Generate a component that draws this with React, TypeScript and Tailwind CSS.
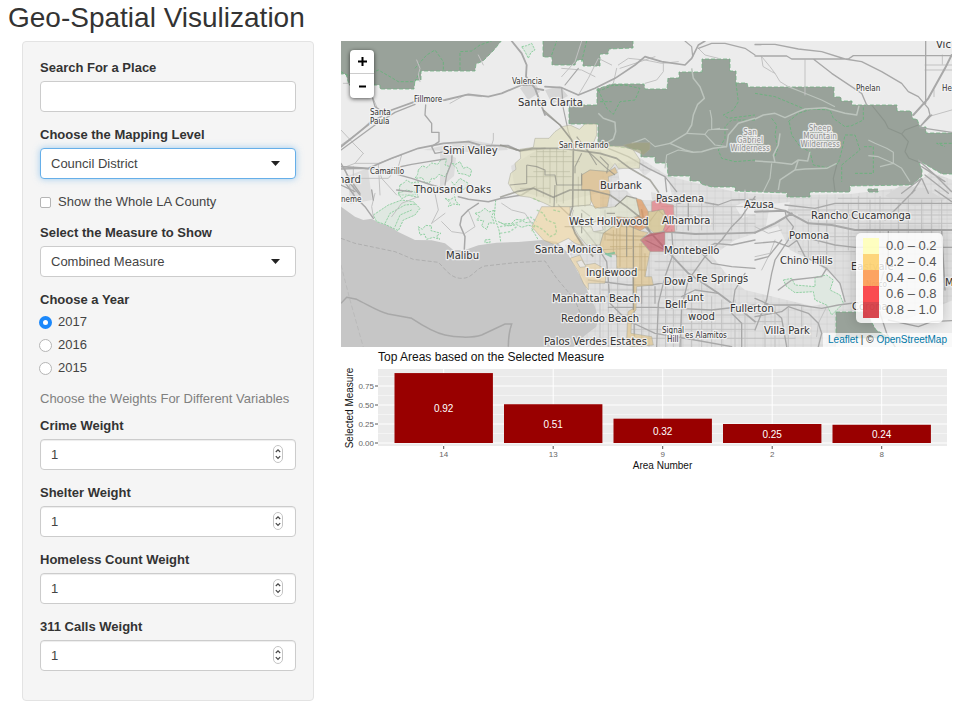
import { useId, useState, type ReactNode } from "react";

/* ---------- Sidebar controls ---------- */

const labelClass = "mb-1 block font-bold text-[#333]";
const fieldClass =
  "block h-[31px] w-full rounded-[4px] border bg-white px-[10px] text-[13px] text-[#444] outline-none";
const restClass = " border-[#ccc]";
const activeClass = " border-[#66afe9] shadow-[0_0_7px_rgba(102,175,233,0.6)]";

function TextField({ label }: { label: string }) {
  const id = useId();
  return (
    <div className="mb-[14px]">
      <label htmlFor={id} className={labelClass}>{label}</label>
      <input id={id} type="text" className={fieldClass + restClass} />
    </div>
  );
}

function SelectField({ label, options, active }: { label: string; options: string[]; active?: boolean }) {
  const id = useId();
  return (
    <div className="mb-[14px]">
      <label htmlFor={id} className={labelClass}>{label}</label>
      <div className="relative">
        <select id={id} className={fieldClass + " appearance-none" + (active ? activeClass : restClass)}>
          {options.map((o) => (
            <option key={o}>{o}</option>
          ))}
        </select>
        <svg className="pointer-events-none absolute right-4 top-[13px] h-[5px] w-[9px]" viewBox="0 0 9 5">
          <path d="M0 0H9L4.500 5Z" fill="#222" />
        </svg>
      </div>
    </div>
  );
}

function NumberField({ label }: { label: string }) {
  const id = useId();
  return (
    <div className="mb-[14px]">
      <label htmlFor={id} className={labelClass}>{label}</label>
      <div className="relative">
        <input
          id={id}
          type="number"
          defaultValue={1}
          className={
            fieldClass +
            restClass +
            " shadow-[inset_0_1px_1px_rgba(0,0,0,0.075)] [appearance:textfield] [&::-webkit-inner-spin-button]:appearance-none"
          }
        />
        <svg className="pointer-events-none absolute right-[13px] top-[6px] h-[18px] w-[10px]" viewBox="0 0 10 18">
          <rect x="0.5" y="0.5" width="9" height="17" rx="4.500" fill="#fff" stroke="#c4c4c4" />
          <path d="M2.800 7 5 4.800 7.200 7M2.800 11.200 5 13.400 7.200 11.200" fill="none" stroke="#444" strokeWidth="1.200" />
        </svg>
      </div>
    </div>
  );
}

function YearPicker() {
  const [year, setYear] = useState("2017");
  return (
    <fieldset className="mb-[13px]">
      <legend className={labelClass}>Choose a Year</legend>
      <div className="flex flex-col gap-[5px]">
        {["2017", "2016", "2015"].map((y) => (
          <label key={y} className="flex items-center gap-[6px]">
            <input
              type="radio"
              name="year"
              value={y}
              checked={year === y}
              onChange={() => setYear(y)}
              className="-ml-px size-[13px] appearance-none rounded-full border border-[#b5b5b5] bg-white checked:border-[4px] checked:border-[#1b88fb]"
            />
            {y}
          </label>
        ))}
      </div>
    </fieldset>
  );
}

function Sidebar() {
  return (
    <form className="col-span-4 rounded-[4px] border border-[#e3e3e3] bg-[#f5f5f5] px-[17px] pb-[15px] pt-[17px] text-[13px] leading-[18px] text-[#444]">
      <TextField label="Search For a Place" />
      <SelectField label="Choose the Mapping Level" options={["Council District", "Zip Code", "Census Tract"]} active />
      <label className="mb-[13px] flex items-center gap-[7px]">
        <input
          type="checkbox"
          className="size-[11px] appearance-none rounded-[2px] border border-[#b5b5b5] bg-white checked:bg-[#1b88fb]"
        />
        Show the Whole LA County
      </label>
      <SelectField label="Select the Measure to Show" options={["Combined Measure", "Crime", "Shelter"]} />
      <YearPicker />
      <p className="mb-[9px] text-[#808080]">Choose the Weights For Different Variables</p>
      <NumberField label="Crime Weight" />
      <NumberField label="Shelter Weight" />
      <NumberField label="Homeless Count Weight" />
      <NumberField label="311 Calls Weight" />
    </form>
  );
}

/* ---------- Map ---------- */

/* Map sheets are drawn on a grid three times finer than the view. */
function Sheet({ x, y, children }: { x: number; y: number; children: ReactNode }) {
  return <g transform={`translate(${x} ${y}) scale(0.33333)`}>{children}</g>;
}

const GREEN = "#72b184";
const PALE = "#bcc4bd";
const BASIN =
  "M600 168 640 158 668 176 700 184 740 193 790 195 850 194 915 186 930 172 953 180V347H575L598 320 590 290 578 270 565 245 600 225Z";

function Land() {
  return (
    <>
      <rect x="341" y="41" width="612" height="306" fill="#ececec" />
      <path d={BASIN} fill="#dfdfdf" />
      <path d="M511 166 540 148 600 150 620 172 612 190 560 202 515 190Z" fill="#dedede" />
      <path d={BASIN} fill="url(#streets)" />
      <path d="M348 176 368 168 372 200 350 204ZM423 150 470 140 505 146 508 150 470 152ZM440 150 456 158 454 176 440 188Z" fill="#dcdcdc" />
      {/* hills */}
      <path
        d="M712 256 735 240 760 232 778 226 790 250 815 262 838 280 844 300 812 306 770 296 745 290 728 276ZM652 170 668 178 672 196 650 192 642 178ZM836 330 870 318 905 320 953 300V347H836Z"
        fill="#ececec"
      />
      <path d="M618 170 636 166 650 182 652 200 636 200 620 184Z" fill="#eeeeee" />
      <path d="M735 206 750 200 756 214 742 218ZM770 204 790 202 786 216 766 226Z" fill="#ececec" />
      {/* darker town centres */}
      <path d="M520 88 534 80 540 92 528 100ZM545 90 560 86 568 96 552 104ZM900 186 925 188 945 200 915 206 885 196Z" fill="#d6d6d6" />
    </>
  );
}

function Ocean() {
  return (
    <Sheet x={335} y={190}>
      <path
        d="M18 50 35 62 60 80 85 90 110 86 135 100 160 106 190 126 240 150 290 151 330 160 355 180 390 180 430 166 485 158 550 156 620 150 665 155 695 185 725 240 750 285 765 320 780 350 790 385 784 410 755 432 735 450 715 472H18Z"
        fill="#c6c6c6"
      />
      <g fill="none" stroke="#a9a9a9">
        <path
          d="M18 145 60 160 180 185 235 208 310 217 C330 235 345 265 380 265 C415 265 420 235 450 228L540 218 630 213 665 265 720 330 748 400"
          strokeWidth="2.500"
          strokeDasharray="12 6"
        />
        <path d="M18 225 45 330 62 390 85 472" strokeWidth="2" strokeDasharray="14 7" stroke="#b4b4b4" />
        <path d="M18 340 35 322 65 328C100 345 130 365 160 372L230 385C260 405 300 428 330 435S410 445 440 435L510 402 530 402Q520 430 520 470" strokeWidth="4.500" stroke="#a8a8a8" />
      </g>
    </Sheet>
  );
}

function Parks() {
  return (
    <>
      <g fill="#99a29a" stroke={GREEN} strokeWidth="0.8" strokeDasharray="4 2">
        <path d="M340 40H502L494 50 483 61 476 64 475 71H421V80H415L414 89H380V85H349L346 74H340Z" />
        <path d="M543 40H633V48L609 49 608 54H600V66H583V60H577L575 65H552V57H543Z" />
        <path d="M569 105H597V89L612 84H644L645 89H667L668 78H679V72H702V59H730V71H736V83H747L748 87H834V97H841V101H852V105H897V111H911L913 119H917L920 127H926V133H954V174H942L935 170 918 160 922 170V176L912 185 850 186V192H810V197H787V193L735 191V187H712L701 184 700 181H690V176H668L667 163H655V157H641V150L612 146H598V124H569Z" />
        <path d="M836 312H866L876 330 890 338H836Z" />
        <path d="M868 189H878V192H868Z" />
      </g>
      <g fill="none" stroke="#68b27c" strokeWidth="2.800" strokeDasharray="9 5">
        <Sheet x={335} y={35}>
          <path d="M18 110 35 120 85 125 130 105 165 125 190 140 240 140 255 110M240 100 275 60 300 45 325 80V105M375 105V50L410 48 435 30 470 18" />
        </Sheet>
        <Sheet x={545} y={35}>
          <path d="M20 60 35 18M110 80 125 18M160 165 185 220 205 238 225 200 270 195 285 160 240 150 200 152 170 165ZM165 200 200 200M573 145 580 200 565 225 535 240 550 250 630 240M630 255H560L540 275V310L520 345 530 370 570 380 630 375" />
        </Sheet>
        <Sheet x={755} y={35}>
          <path d="M0 175 60 185 120 210 155 225M100 260 130 235 170 222 225 225 235 250 270 275 290 272 325 255V215M103 262 110 300 135 335 165 350 175 390 215 398 250 385 262 340 270 300 300 300 315 345 290 365 260 390V440M50 250 65 270 60 300 68 340 60 365M300 415H355V335H325M590 325H545L570 335" />
        </Sheet>
      </g>
      {/* smaller reserves, speckled outlines */}
      <g fill="#dfe8e1" stroke="#93d0a4" strokeWidth="3" strokeDasharray="7 3">
        <Sheet x={335} y={35}>
          <path d="M250 405 262 392 275 398 290 384 308 388 318 374 335 372 330 390 345 395 338 410 330 425 312 418 300 432 290 430 284 442 270 445 262 428 240 430 248 418ZM195 450 205 445 215 435 228 444 250 440 252 455 265 465 248 468 240 480H190ZM350 385 362 388 375 380 385 400 396 396 410 405 405 425 390 418 370 415 366 400Z" fillOpacity="0.6" />
          <path d="M350 440 358 450 375 430 400 445 390 462 370 466 356 480" fillOpacity="0.6" />
          <path d="M560 35 575 32 590 25 600 45 588 52 580 70 570 50Z" />
        </Sheet>
        <Sheet x={335} y={190}>
          <path d="M115 75 160 45 200 30 235 35 255 55 240 75 205 90 190 122 150 103 125 95Z" />
          <path d="M250 110 262 118 272 106 290 108 288 122 300 125 318 130 304 138 315 148 295 142 275 148 268 132 255 135ZM420 70 436 66 450 55 462 66 480 60 470 78 478 100 462 98 455 118 440 108 446 92 425 90 434 80ZM330 25 344 30 360 20 362 34 375 45 356 42 340 50 346 38ZM490 95 505 102 530 100 542 88 560 90 572 98 590 95 600 110 580 106 560 112 545 104 520 108ZM450 150 465 148 465 158 450 158ZM190 10 215 0 245 8 250 22 220 16 200 26Z" fillOpacity="0.4" />
          <path d="M482 30 478 80 492 120 497 155M590 115 610 150" fill="none" />
          <path d="M150 100 165 70 210 45 245 42M180 110 195 75 230 60" fill="none" />
        </Sheet>
        <Sheet x={755} y={190}>
          <path d="M85 270 110 265 120 285 180 290 180 262 215 255 235 270 225 300 255 315 265 340 230 375 215 345 180 330 175 305 120 308 95 290Z" />
        </Sheet>
      </g>
      <g fill="none" stroke={PALE} strokeWidth="4.500" strokeLinejoin="round">
        <Sheet x={545} y={35}>
          <path d="M160 235 175 250 210 262 212 290 205 312 180 325M440 100 445 130 465 155 478 190 458 208 445 240 440 270 425 295 400 310 375 325 420 345 445 352 470 350 505 340 545 335 550 300 580 265 630 250" />
          <path d="M425 295 480 298 510 330 545 335M495 225 500 250 500 283H550M478 300 490 285 525 280M445 352 400 345 365 360 360 400M375 325 330 335 300 310 260 325" strokeWidth="3.500" />
        </Sheet>
        <Sheet x={755} y={35}>
          <path d="M0 252 25 240 60 235 90 248 130 230 150 222 210 218 270 235 305 240 312 212M0 378 60 382 110 388 130 375 158 378 165 350M60 382 55 360 70 330 75 295M130 375 120 405 75 435 70 465M120 405 150 402 215 400 245 385" />
          <path d="M340 315 360 325 395 340 415 352 415 385 440 400 465 440M340 362 370 365 415 385 375 395M50 385 45 430 25 470M100 155 150 175 200 195 240 215" strokeWidth="3.500" />
          <path d="M350 210 390 260 400 280 440 297 460 320 450 350 462 370 500 385M440 297 450 285 490 270M245 390 235 430 240 470" strokeWidth="3.500" stroke="#8b948c" />
        </Sheet>
      </g>
    </>
  );
}

function Roads() {
  return (
    <g fill="none" strokeLinejoin="round" strokeLinecap="round">
      {/* local roads */}
      <g stroke="#c2c2c2" strokeWidth="3">
        <Sheet x={335} y={35}>
          <path d="M25 145H45M110 180 125 215M18 285 60 330 85 355M18 330 75 290 105 260M85 355 60 385 20 400M60 385 130 385 200 360M75 430H160L190 395 200 360M130 385 135 480M55 395V480M245 75 255 100 250 120 255 140M430 60 445 90M345 205 390 180 440 185M475 295V315L470 330M130 395 140 430 185 480M30 400 48 470" />
        </Sheet>
        <Sheet x={545} y={35}>
          <path d="M100 180 130 130 160 70 200 90M50 100 110 105 150 125M220 90 250 70 300 75 350 85 400 80M355 80V110L335 135 300 145M460 40 480 60 520 70M110 18 90 80 50 125M215 100 205 145M225 100 330 65" />
        </Sheet>
        <Sheet x={755} y={35}>
          <path d="M20 65 45 95 60 115 50 110 25 95ZM60 115 75 140 100 155M510 90H590M510 105H590M562 60V88M150 75V180M537 165V185M590 225 555 235 520 245M0 30H18" />
        </Sheet>
        <Sheet x={335} y={190}>
          <path d="M120 10 110 50 115 80M250 20 200 40 170 80M300 10 310 60 290 100M330 70 290 100M500 40 530 60 570 70 590 100M385 130 350 125 320 95M400 60 420 110 390 130" />
        </Sheet>
        <Sheet x={545} y={190}>
          <path d="M165 80V470M190 240V470M218 230V470M245 90V250M290 290V470M312 200V470M362 290V470M385 200V470M410 330V470M440 320V470M470 270V470M500 320V470M530 330V470M570 330V470M600 350V470M170 300H430M180 320H430M190 375H600M250 400H630M260 418H630M280 445H630M395 30V120M430 30V120M470 20V120M505 40V120M560 50V120M350 50H630M380 75H630M370 150H560M380 100H630M330 215H460M330 240H460M600 0V130" />
        </Sheet>
        <Sheet x={755} y={190}>
          <path d="M160 90V200M190 30V160M215 30V200M240 60V180M280 40V180M310 20V120M345 30V120M375 20V130M430 40V130M460 20V130M500 30V130M530 30V130M560 30V130M100 60H590M130 75H590M140 140H300M130 185H300M180 100H590M250 25H590M0 370H60M0 395H80M0 445H120M30 330V470M60 350V470M100 355V470M140 350V420M0 110 40 130 80 120M0 200 45 190 60 150M20 240 40 200M215 350 190 400 185 440" />
        </Sheet>
      </g>
      {/* highways */}
      <g stroke="#a8a8a8" strokeWidth="4">
        <Sheet x={335} y={35}>
          <path d="M18 335 105 265 170 225 240 200 330 195 400 178 460 185 500 175 560 150 590 150" strokeWidth="5.500" />
          <path d="M18 345 120 270 180 232 240 208M272 210 270 240 290 265V292H312V320L290 335 300 355 330 350" />
          <path d="M18 395 100 400 170 370 250 340 325 325 400 320 440 332 520 332 555 348 630 340M520 332 545 345" strokeWidth="5" />
          <path d="M352 340 350 380 335 420 330 450M330 372 280 380 230 388 150 405 80 400 18 402M18 450 60 470M150 408 230 430 290 450 330 460" />
          <path d="M530 18 560 55 575 90 573 125 600 160 630 240M600 160 625 165" strokeWidth="5.500" />
          <path d="M18 385 40 425 75 475M110 180 120 215 150 235" />
        </Sheet>
        <Sheet x={545} y={35}>
          <path d="M0 155 50 158 100 180 150 160 210 130 270 90 300 65 350 80 420 90 440 70 460 30 480 18" strokeWidth="5" />
          <path d="M420 18 440 35 443 65M460 40 500 25 540 25 600 40 630 60M50 158 55 220 70 290 85 330M0 235 45 270 80 315M100 100 60 150" strokeWidth="3.500" />
          <path d="M190 340 250 365 310 400 360 425 395 470M360 425 365 470" />
        </Sheet>
        <Sheet x={755} y={35}>
          <path d="M0 28 60 28 130 42 200 50 270 72 320 80 380 110 440 145 460 170 490 185 520 220 525 240 495 275M0 63H95L110 72H280L295 62H590M175 72 230 115 320 175 335 210M512 18V205M495 278 590 292M495 275 530 240" />
          <path d="M590 60 570 100 520 190 475 240" strokeWidth="6" />
          <path d="M490 375 540 420 590 470M500 395 570 440M440 475 500 430M510 420 580 475M470 475 500 430 520 475" />
        </Sheet>
        <Sheet x={335} y={190}>
          <path d="M18 -40 60 20 90 50 115 85M45 -20 75 15M185 0 230 5M370 20 400 28 460 35 500 25 560 15 600 -10M430 40 400 60 380 80 375 105 390 140 388 178M110 0 115 30" strokeWidth="4.500" />
        </Sheet>
        <Sheet x={545} y={190}>
          <path d="M150 125 200 135 300 140 360 125 450 132 560 130 630 128M290 60 300 110 355 170 430 250 520 310 600 370 630 395" strokeWidth="5.500" />
          <path d="M40 45 110 110 150 160 185 215 190 270 195 340 245 390 330 430 450 450 560 470M265 140 268 470M380 120 385 190 360 260 340 340 335 470M560 110 530 150 480 200 430 270 410 350 405 470M300 150 380 190 450 190 510 160 560 165 630 150M130 270 250 285 320 285 400 270 420 265M190 352H330L500 360 630 345M350 20 400 40 440 30 520 45 560 30 630 28M630 20 590 80 560 110M470 190 500 220 560 230 630 235M430 20V120M410 320 450 300 520 310M600 250 570 300 560 370 590 400V470" />
          <path d="M60 110H290M110 60 150 90M150 180 260 175M180 60V150M215 100V200M310 100 340 60 380 100 360 125M290 160V340M330 290V340" strokeWidth="3.500" />
        </Sheet>
        <Sheet x={755} y={190}>
          <path d="M0 65 90 62 160 100 230 105 300 120H590M0 128 60 100 110 70" strokeWidth="6" />
          <path d="M0 45 40 50 90 62 95 85 115 110 100 150 60 210 50 250 35 330 0 420M0 160 60 155 100 170 140 140 240 165 300 172 590 172M90 45 180 55 240 40 590 40M110 120 150 200 215 235 255 280 270 335M0 325 45 345 130 345 200 355 250 345 330 335M400 120V200L370 300 375 370 395 430 420 470M0 380 80 365 100 350 160 370 190 400 200 430 190 470M30 340 80 385 95 470M560 120 570 300M0 210 40 200 80 150M390 90 470 10 480 0M540 0 590 35M70 300 110 270 200 260 215 235M400 390 490 410 530 395 590 392" />
        </Sheet>
      </g>
    </g>
  );
}

function Districts() {
  return (
    <g stroke="#a8a89a" strokeWidth="2" strokeOpacity="0.75" fillOpacity="0.62">
      <Sheet x={500} y={110}>
        <path
          d="M187 50 210 45 238 58 255 42H290V75L280 100 330 108H370L400 120 420 150 418 175H355L345 160 325 185 270 180 245 195V240H270L275 270 270 285 210 290H155L130 278 90 262 60 258 40 245 25 220 32 190 48 178 45 160 62 145 60 118 100 112 105 85 147 85 165 65Z"
          fill="#deddb8"
        />
        <path d="M210 290 270 285 300 295 345 290 380 258 410 268 420 315 390 325 345 320V345L310 370 300 405H260L235 375 212 335 220 300Z" fill="#e0e3c9" />
        <path d="M370 105 400 98H450V118L430 135 400 120Z" fill="#a3a17b" />
        <path d="M125 290 210 290 212 345 232 375 255 410 225 400 205 385 165 405 130 390 95 350 105 330Z" fill="#edd39c" />
        <path d="M245 195 270 180 325 185 345 172 352 188 340 195 325 200 330 250 322 290 285 295 272 270 270 240H245Z" fill="#dfb878" />
        <path d="M345 320 400 325 420 315 408 265 425 270 445 305 450 345 420 362 380 345H345Z" fill="#e0965a" fillOpacity="0.7" />
        <path d="M445 305 490 298 502 330 490 362 465 372 440 350Z" fill="#d6c48c" fillOpacity="0.75" />
        <path d="M455 275 488 262 500 282 520 285 525 365 495 368 490 360 502 330 490 298 455 305Z" fill="#e37b82" fillOpacity="0.72" />
        <path d="M420 390 450 370 495 365V425H450Z" fill="#c24a58" />
        <path d="M300 405 310 370 345 345 380 345 420 362 445 368 420 390 450 425 445 450 435 500 455 500 460 525 410 530 408 600 395 612 393 670 455 680 460 705 390 710 380 690 384 605 400 595 398 475H350V435L315 430Z" fill="#e2c384" />
        <path d="M210 445 240 435 255 465 285 460 320 480 315 520 265 520V540L250 520 235 485Z" fill="#eed3a0" />
      </Sheet>
      <Sheet x={500} y={110}>
        <path d="M230 455 245 450 258 470 240 472ZM270 340 300 330 310 360 280 365Z" fill="#e8e8e8" fillOpacity="0.9" />
        <path d="M110 125H200M90 140H215M110 155H240M100 185H210M80 200H215M60 235H150M110 115V260M130 120V260M150 115V280M170 115V280M190 120V280M235 200V290M255 240V290" fill="none" stroke="#bcbca2" strokeWidth="2.500" />
        <path d="M320 390H440M330 410H440M350 440H445M340 360V430M360 350V470M420 400V480M435 430V500M400 480H440" fill="none" stroke="#c0ab7c" strokeWidth="2.500" />
        <path d="M315 430 335 440 325 432 345 428" fill="none" stroke="#6fbf98" strokeWidth="6" />
        <path d="M110 300 130 310 140 330 165 340 170 370 150 380 130 360 105 345 95 365M100 265 120 275M160 300 180 305" fill="none" stroke="#a3cf95" strokeWidth="4" strokeDasharray="8 5" />
        <path d="M0 350 30 345 60 335 90 320 110 335M0 370 30 365 50 350" fill="none" stroke="#93d0a4" strokeWidth="4" strokeDasharray="7 5" />
        <g fill="none" stroke="#8f8f86" strokeOpacity="0.7" strokeLinejoin="round">
          <path d="M130 0 180 45 215 90 220 120 218 290 208 320 225 370 250 410 280 440M0 105 60 122 100 115 190 115 300 130 350 145 390 175 450 210 475 245 480 280M0 262 50 245 100 235 160 262 210 240 270 240 330 255 380 290 430 330 450 365" strokeWidth="5" />
          <path d="M80 165V220L30 225M80 165 110 170 135 180V195H165L170 225 245 225V190M165 225 162 290M245 130 225 170V190M300 140 325 165 320 190M230 80 260 120 320 175 345 195M250 100 290 165M345 290 380 258 410 265M380 345V440M400 345V600M245 310V370M320 310H345" strokeWidth="3.500" />
        </g>
      </Sheet>
    </g>
  );
}

type Place = [name: string, x: number, y: number];

const CITIES: Place[] = [
  ["Vic", 936, 48], ["Santa Clarita", 518, 106], ["Simi Valley", 443, 154], ["Thousand Oaks", 414, 193],
  ["nard", 338, 183], ["Malibu", 446, 259], ["Santa Monica", 535, 253], ["West Hollywood", 569, 225],
  ["Burbank", 600, 189], ["Pasadena", 656, 202], ["Alhambra", 662, 224], ["Montebello", 664, 254],
  ["Inglewood", 586, 276], ["Manhattan Beach", 552, 302], ["Redondo Beach", 561, 322],
  ["Palos Verdes Estates", 544, 345], ["Azusa", 744, 208], ["Rancho Cucamonga", 811, 219],
  ["Pomona", 789, 239], ["Chino Hills", 780, 264], ["Eastvale", 851, 270], ["Corona", 852, 310],
  ["Fullerton", 730, 312], ["Villa Park", 764, 334], ["M", 945, 286], ["Dow", 664, 285],
  ["a Fe Springs", 687, 282], ["Bellf", 665, 308], ["unt", 687, 301], ["wood", 688, 320],
];

const TOWNS: Place[] = [
  ["Valencia", 512, 84], ["Fillmore", 414, 102], ["Santa", 370, 115], ["Paula", 370, 124],
  ["Camarillo", 370, 174], ["neme", 341, 202], ["San Fernando", 559, 148], ["Phelan", 856, 91],
  ["He", 942, 91], ["Norco", 866, 287], ["Signal", 662, 333], ["Hill", 667, 342], ["es Alamitos", 685, 338],
];

const WILDS: Place[] = [
  ["San", 750, 135], ["Gabriel", 750, 143], ["Wilderness", 750, 151],
  ["Sheep", 820, 131], ["Mountain", 820, 139], ["Wilderness", 820, 147],
];

function Names({ places }: { places: Place[] }) {
  return (
    <>
      {places.map(([name, x, y]) => (
        <text key={name + x} x={x} y={y}>{name}</text>
      ))}
    </>
  );
}

function ZoomControl() {
  const button = "flex w-full items-center justify-center text-black";
  return (
    <div className="absolute left-[9px] top-[9px] w-6 divide-y divide-[#ccc] rounded-[4px] bg-white shadow-[0_1px_4px_rgba(0,0,0,0.65)]">
      <button type="button" aria-label="Zoom in" className={button + " h-6"}>
        <svg className="size-[9px]" viewBox="0 0 9 9"><path d="M4.500 0V9M0 4.500H9" stroke="#000" strokeWidth="2" /></svg>
      </button>
      <button type="button" aria-label="Zoom out" className={button + " h-6"}>
        <svg className="size-[9px]" viewBox="0 0 9 9"><path d="M1 4.500H8" stroke="#000" strokeWidth="2" /></svg>
      </button>
    </div>
  );
}

const LEGEND = [
  { range: "0.0 – 0.2", swatch: "bg-[#ffffb2]" },
  { range: "0.2 – 0.4", swatch: "bg-[#fecc5c]" },
  { range: "0.4 – 0.6", swatch: "bg-[#fd8d3c]" },
  { range: "0.6 – 0.8", swatch: "bg-[#fa1f25]" },
  { range: "0.8 – 1.0", swatch: "bg-[#d01a24]" },
];

function Legend() {
  return (
    <ul className="absolute bottom-6 right-[9px] w-[87px] rounded-[5px] bg-white/80 px-[7px] py-[5px] text-[13px] leading-4 text-[#555] shadow-[0_0_13px_rgba(0,0,0,0.2)]">
      {LEGEND.map((row) => (
        <li key={row.range} className="flex gap-[7px] whitespace-nowrap">
          <span className={"h-4 w-4 shrink-0 opacity-80 " + row.swatch} />
          {row.range}
        </li>
      ))}
    </ul>
  );
}

function MapView() {
  return (
    <div className="relative h-[306px] overflow-hidden bg-[#ddd]">
      <svg className="block h-full w-full" viewBox="341 41 611 306" preserveAspectRatio="xMidYMid slice">
        <defs>
          <pattern id="streets" width="8" height="7" patternUnits="userSpaceOnUse">
            <path d="M0 2H8M3 0V7" stroke="#d3d3d3" strokeWidth="0.8" />
          </pattern>
        </defs>
        <Land />
        <Ocean />
        <Parks />
        <Roads />
        <Districts />
        <g
          className="font-['DejaVu_Sans',sans-serif] text-[10px] [paint-order:stroke]"
          fill="#333"
          stroke="#f4f4f4"
          strokeOpacity="0.85"
          strokeWidth="2.500"
          strokeLinejoin="round"
        >
          <Names places={CITIES} />
          <g className="font-['DejaVu_Sans_Condensed','DejaVu_Sans',sans-serif] text-[8px]">
            <Names places={TOWNS} />
            <g fill="#8d8d8d" textAnchor="middle">
              <Names places={WILDS} />
            </g>
          </g>
        </g>
      </svg>
      <ZoomControl />
      <Legend />
      <p className="absolute bottom-0 right-0 bg-white/70 px-[5px] text-[10px] leading-[14px] text-[#333]">
        <a href="#leaflet" className="text-[#0078a8]">Leaflet</a> | © <a href="#osm" className="text-[#0078a8]">OpenStreetMap</a>
      </p>
    </div>
  );
}

/* ---------- Bar chart ---------- */

const BARS = [
  { area: "14", value: 0.92 },
  { area: "13", value: 0.51 },
  { area: "9", value: 0.32 },
  { area: "2", value: 0.25 },
  { area: "8", value: 0.24 },
];

const BASE = 96;
const UNIT = 76;

function BarChart() {
  return (
    <svg className="block w-full font-['Liberation_Sans',Arial,sans-serif]" viewBox="0 0 611 126" role="img" aria-label="Top Areas based on the Selected Measure">
      <text x="37" y="14" className="text-[12px]" fill="#111">Top Areas based on the Selected Measure</text>
      <rect x="37" y="22" width="569" height="77" fill="#ebebeb" />
      {[0.125, 0.375, 0.625, 0.875].map((v) => (
        <path key={v} d={`M37 ${BASE - v * UNIT}H606`} stroke="#f6f6f6" strokeWidth="0.8" />
      ))}
      {[0, 0.25, 0.5, 0.75].map((v) => (
        <g key={v}>
          <path d={`M37 ${BASE - v * UNIT}H606`} stroke="#fff" />
          <path d={`M34 ${BASE - v * UNIT}H37`} stroke="#555" />
          <text x="33" y={BASE + 3 - v * UNIT} textAnchor="end" className="text-[8px]" fill="#666">{v.toFixed(2)}</text>
        </g>
      ))}
      {BARS.map(({ area, value }, i) => {
        const cx = 102.700 + i * 109.500;
        const h = value * UNIT;
        return (
          <g key={area} textAnchor="middle">
            <path d={`M${cx} 22V99`} stroke="#fff" />
            <path d={`M${cx} 99V102`} stroke="#555" />
            <rect x={cx - 49.200} y={BASE - h} width="98.400" height={h} fill="#990000" />
            <text x={cx} y={BASE - h / 2 + 4} className="text-[10px]" fill="#fff">{value}</text>
            <text x={cx} y="110" className="text-[8px]" fill="#666">{area}</text>
          </g>
        );
      })}
      <text x="321.500" y="122" textAnchor="middle" className="text-[10px]" fill="#111">Area Number</text>
      <text transform="translate(12 61) rotate(-90)" textAnchor="middle" className="text-[10px]" fill="#111">Selected Measure</text>
    </svg>
  );
}

export default function App() {
  return (
    <main className="bg-white font-['Liberation_Sans',Arial,sans-serif]">
      <h1 className="h-[41px] pl-2 text-[28px] leading-[35px] text-[#333]">Geo-Spatial Visulization</h1>
      <div className="grid grid-cols-12 items-start gap-x-[27px] px-[22px]">
        <Sidebar />
        <section className="col-span-8">
          <MapView />
          <BarChart />
        </section>
      </div>
    </main>
  );
}
